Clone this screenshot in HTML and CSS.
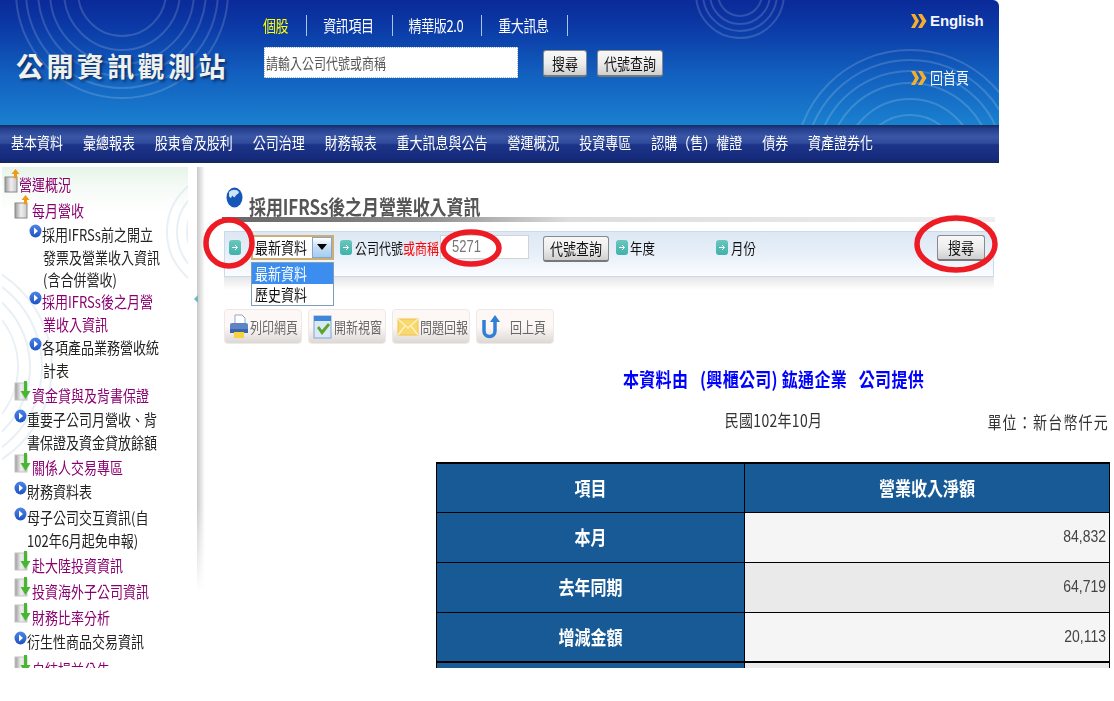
FILE: index.html
```html
<!DOCTYPE html>
<html lang="zh-Hant">
<head>
<meta charset="utf-8">
<title>公開資訊觀測站</title>
<link rel="stylesheet" href="styles.css">
</head>
<body>
<svg class="defs" width="0" height="0" aria-hidden="true">
  <defs>
    <linearGradient id="page" x1="0" y1="0" x2="1" y2="0"><stop offset="0" stop-color="#9a9a9a"/><stop offset=".5" stop-color="#efefef"/><stop offset="1" stop-color="#c8c8c8"/></linearGradient>
    <linearGradient id="ball" x1="0" y1="0" x2="0" y2="1"><stop offset="0" stop-color="#4f86e6"/><stop offset="1" stop-color="#1c52c4"/></linearGradient>
    <linearGradient id="teal" x1="0" y1="0" x2="0" y2="1"><stop offset="0" stop-color="#69c7bd"/><stop offset="1" stop-color="#3fb2ab"/></linearGradient>
    <symbol id="up" viewBox="0 0 18 24"><rect x="1" y="8" width="12" height="15" fill="url(#page)" stroke="#8a8a8a"/><path d="M10 9V5H7.5L11.5 0l4 5H13v5z" fill="#f29a12"/></symbol>
    <symbol id="down" viewBox="0 0 18 24"><rect x="1" y="3" width="12" height="17" fill="url(#page)" stroke="#c4c4c4"/><path d="M10 1h3v10h3.500l-5 8-5-8H10z" fill="#46b82f"/></symbol>
    <symbol id="leaf" viewBox="0 0 13 14"><ellipse cx="6.5" cy="7" rx="6" ry="6.5" fill="url(#ball)"/><path d="M5 3.5l4 3.5-4 3.5z" fill="#fff"/></symbol>
    <symbol id="go" viewBox="0 0 12 15"><rect x="0" y="0" width="12" height="15" rx="3" fill="url(#teal)"/><path d="M3 7.5h5M6 5l2.5 2.500L6 10" fill="none" stroke="#fff" stroke-width="1"/></symbol>
    <symbol id="chev" viewBox="0 0 16 16"><path d="M0 1h4l4 7-4 7H0l4-7zM7 1h4l4.500 7-4.500 7H7l4-7z" fill="#f4ad2c"/></symbol>
  </defs>
</svg>

<div class="page">
  <header class="site-header">
    <div class="banner">
      <svg class="arcs" width="999" height="125" aria-hidden="true">
        <g fill="none" stroke="#fff" stroke-opacity=".16" stroke-width="2">
          <circle cx="122" cy="-8" r="106"/><circle cx="122" cy="-8" r="96"/><circle cx="122" cy="-8" r="84"/><circle cx="122" cy="-8" r="72"/><circle cx="122" cy="-8" r="58"/><circle cx="122" cy="-8" r="44"/>
          <circle cx="740" cy="-6" r="44"/><circle cx="740" cy="-6" r="37"/><circle cx="740" cy="-6" r="30"/><circle cx="740" cy="-6" r="22"/>
          <circle cx="910" cy="165" r="115"/><circle cx="910" cy="165" r="105"/><circle cx="910" cy="165" r="94"/><circle cx="910" cy="165" r="82"/><circle cx="910" cy="165" r="66"/><circle cx="910" cy="165" r="50"/>
        </g>
      </svg>
      <div class="logo">公開資訊觀測站</div>
      <div class="finder">
        <nav class="tabs">
          <a class="tab tab-on"><span class="t">個股</span></a>
          <a class="tab"><span class="t">資訊項目</span></a>
          <a class="tab"><span class="t">精華版2.0</span></a>
          <a class="tab"><span class="t">重大訊息</span></a>
        </nav>
        <div class="search-row">
          <div class="search-box"><span class="t">請輸入公司代號或商稱</span></div>
          <button class="btn btn-search" type="button"><span class="t">搜尋</span></button>
          <button class="btn btn-code" type="button"><span class="t">代號查詢</span></button>
        </div>
      </div>
      <div class="links">
        <a class="link link-en"><svg class="chev" width="16" height="16"><use href="#chev"/></svg>English</a>
        <a class="link"><svg class="chev" width="16" height="16"><use href="#chev"/></svg><span class="t">回首頁</span></a>
      </div>
    </div>
    <nav class="mainnav">
      <a><span class="t">基本資料</span></a>
      <a><span class="t">彙總報表</span></a>
      <a><span class="t">股東會及股利</span></a>
      <a><span class="t">公司治理</span></a>
      <a><span class="t">財務報表</span></a>
      <a><span class="t">重大訊息與公告</span></a>
      <a><span class="t">營運概況</span></a>
      <a><span class="t">投資專區</span></a>
      <a><span class="t">認購（售）權證</span></a>
      <a><span class="t">債券</span></a>
      <a><span class="t">資產證券化</span></a>
    </nav>
  </header>

  <div class="body-row">
    <aside class="sidebar">
      <svg class="side-arcs" width="186" height="425" aria-hidden="true">
        <g fill="none" stroke="#d8e6ee" stroke-opacity=".6" stroke-width="2">
          <circle cx="225" cy="65" r="60"/><circle cx="225" cy="65" r="50"/><circle cx="225" cy="65" r="40"/><circle cx="225" cy="65" r="30"/>
          <circle cx="-60" cy="200" r="110"/><circle cx="-60" cy="200" r="100"/><circle cx="-60" cy="200" r="88"/><circle cx="-60" cy="200" r="76"/>
        </g>
      </svg>
      <span class="side-toggle"></span>
      <div class="row folder lv0"><svg class="ficon" width="18" height="24"><use href="#up"/></svg><span class="t">營運概況</span></div>
      <div class="row folder lv1"><svg class="ficon" width="18" height="24"><use href="#up"/></svg><span class="t">每月營收</span></div>
      <div class="row leaf lv2 h3"><svg class="licon" width="13" height="14"><use href="#leaf"/></svg><div><span class="ln">採用IFRSs前之開立</span><span class="ln in">發票及營業收入資訊</span><span class="ln in">(含合併營收)</span></div></div>
      <div class="row leaf lv2 h2 on"><svg class="licon" width="13" height="14"><use href="#leaf"/></svg><div><span class="ln">採用IFRSs後之月營</span><span class="ln in">業收入資訊</span></div></div>
      <div class="row leaf lv2 h2"><svg class="licon" width="13" height="14"><use href="#leaf"/></svg><div><span class="ln">各項產品業務營收統</span><span class="ln in">計表</span></div></div>
      <div class="row folder lv1"><svg class="ficon" width="18" height="24"><use href="#down"/></svg><span class="t">資金貸與及背書保證</span></div>
      <div class="row leaf lv1b h2"><svg class="licon" width="13" height="14"><use href="#leaf"/></svg><div><span class="ln">重要子公司月營收、背</span><span class="ln">書保證及資金貸放餘額</span></div></div>
      <div class="row folder lv1"><svg class="ficon" width="18" height="24"><use href="#down"/></svg><span class="t">關係人交易專區</span></div>
      <div class="row leaf lv1b h1"><svg class="licon" width="13" height="14"><use href="#leaf"/></svg><div><span class="ln">財務資料表</span></div></div>
      <div class="row leaf lv1b h2"><svg class="licon" width="13" height="14"><use href="#leaf"/></svg><div><span class="ln">母子公司交互資訊(自</span><span class="ln">102年6月起免申報)</span></div></div>
      <div class="row folder lv1"><svg class="ficon" width="18" height="24"><use href="#down"/></svg><span class="t">赴大陸投資資訊</span></div>
      <div class="row folder lv1"><svg class="ficon" width="18" height="24"><use href="#down"/></svg><span class="t">投資海外子公司資訊</span></div>
      <div class="row folder lv1"><svg class="ficon" width="18" height="24"><use href="#down"/></svg><span class="t">財務比率分析</span></div>
      <div class="row leaf lv1b h1"><svg class="licon" width="13" height="14"><use href="#leaf"/></svg><div><span class="ln">衍生性商品交易資訊</span></div></div>
      <div class="row folder lv1"><svg class="ficon" width="18" height="24"><use href="#down"/></svg><span class="t">自結損益公告</span></div>
    </aside>

    <main class="content">
      <div class="title-row">
        <svg class="globe" width="17" height="21" viewBox="0 0 17 21" aria-hidden="true"><ellipse cx="8.500" cy="10.500" rx="8" ry="10" fill="#1457b8"/><path d="M3 5c3-3 8-3 10 0-1 3-3 2-4 5-2 1-2-2-3-1-1 3-2 2-3 0z" fill="#cfe3f5"/></svg>
        <h1 class="title"><span class="t">採用IFRSs後之月營業收入資訊</span></h1>
      </div>
      <div class="title-bar"></div>

      <form class="toolbar">
        <svg class="go go-first" width="12" height="15"><use href="#go"/></svg>
        <div class="select">
          <div class="select-box"><span class="t">最新資料</span><span class="select-arrow"></span></div>
          <ul class="select-list">
            <li class="sel"><span class="t">最新資料</span></li>
            <li><span class="t">歷史資料</span></li>
          </ul>
        </div>
        <svg class="go" width="12" height="15"><use href="#go"/></svg>
        <label class="lbl lbl-code"><span class="t">公司代號<b class="red">或商稱</b></span></label>
        <div class="code-input"><span class="t">5271</span></div>
        <button class="btn btn-tool-code" type="button"><span class="t">代號查詢</span></button>
        <svg class="go" width="12" height="15"><use href="#go"/></svg>
        <label class="lbl lbl-year"><span class="t">年度</span></label>
        <svg class="go" width="12" height="15"><use href="#go"/></svg>
        <label class="lbl"><span class="t">月份</span></label>
        <button class="btn btn-tool-search" type="button"><span class="t">搜尋</span></button>
      </form>
      <div class="toolbar-shadow"></div>

      <div class="actions">
        <a class="action">
          <svg width="20" height="26" viewBox="0 0 20 26"><path d="M6 1h7l3 3v6H6z" fill="#fff" stroke="#8fa8cc"/><rect x="1" y="9" width="18" height="9" rx="2" fill="#5f84c4"/><rect x="1" y="15" width="18" height="4" fill="#3e64a8"/><rect x="5" y="18" width="10" height="6" fill="#f7d23f"/></svg>
          <span class="t">列印網頁</span>
        </a>
        <a class="action">
          <svg width="20" height="26" viewBox="0 0 20 26"><rect x="1" y="2" width="17" height="22" fill="#dbe9f7" stroke="#7fa6d6"/><rect x="1" y="2" width="17" height="5" fill="#3d86d8"/><path d="M4 14l2-2 3 4 6-7 2 2-8 10z" fill="#5aa52e"/></svg>
          <span class="t">開新視窗</span>
        </a>
        <a class="action">
          <svg width="22" height="26" viewBox="0 0 22 26"><rect x="1" y="5" width="20" height="16" fill="#f9d86e" stroke="#eec24a"/><path d="M1 5l10 9 10-9M1 21l7-9M21 21l-7-9" fill="none" stroke="#fdf1bd" stroke-width="1.500"/></svg>
          <span class="t">問題回報</span>
        </a>
        <a class="action action-back">
          <svg width="20" height="26" viewBox="0 0 20 26"><path d="M3 6v11a5.500 5.500 0 0 0 11 0V7" fill="none" stroke="#2f7fd6" stroke-width="3.500"/><path d="M14 1l5 7H9z" fill="#2f7fd6"/></svg>
          <span class="t action-gap">回上頁</span>
        </a>
      </div>

      <div class="report">
        <p class="source"><span class="t">本資料由&nbsp;&nbsp;&nbsp;(興櫃公司) 鈜通企業&nbsp;&nbsp;&nbsp;公司提供</span></p>
        <div class="period"><span class="t">民國102年10月</span><span class="unit t">單位：新台幣仟元</span></div>
        <table class="data">
          <colgroup><col class="c1"><col class="c2"></colgroup>
          <tr class="head"><th><span class="t">項目</span></th><th><span class="t">營業收入淨額</span></th></tr>
          <tr><th><span class="t">本月</span></th><td class="odd"><span class="t">84,832</span></td></tr>
          <tr><th><span class="t">去年同期</span></th><td class="even"><span class="t">64,719</span></td></tr>
          <tr><th><span class="t">增減金額</span></th><td class="odd"><span class="t">20,113</span></td></tr>
          <tr class="next"><th></th><td class="even"></td></tr>
        </table>
      </div>
    </main>
  </div>

  <svg class="marks" width="1114" height="668" aria-hidden="true">
    <g fill="none" stroke="#ed1c24" stroke-width="5.500">
      <ellipse cx="229" cy="243" rx="23" ry="23"/>
      <ellipse cx="471" cy="248" rx="28" ry="16"/>
      <ellipse cx="956" cy="244" rx="39" ry="26"/>
    </g>
  </svg>
</div>
</body>
</html>
```
FILE: styles.css
```css
* { box-sizing: border-box; }
html, body { margin: 0; padding: 0; background: #fff; }
body { font-family: "Noto Sans CJK TC", "Liberation Sans", sans-serif; font-size: 13px; color: #222; }
.defs { position: absolute; }
.page { position: relative; width: 1114px; height: 668px; overflow: hidden; background: #fff; }
.t { display: inline-block; transform: scaleY(1.22); line-height: 1; }

/* header */
.site-header { width: 999px; }
.banner { position: relative; height: 125px; display: flex; overflow: hidden; border-radius: 0 6px 0 0;
  background: linear-gradient(#0a2a98 0, #0b3aa6 22%, #1260bf 60%, #1a80cf 100%); }
.arcs { position: absolute; left: 0; top: 0; }
.logo { position: relative; flex: none; width: 263px; padding: 44px 0 0 16px; font-size: 27px; font-weight: 700; letter-spacing: 3.400px; line-height: 44px; color: #f1f1ec; text-shadow: 2px 2px 3px #0a2d66; white-space: nowrap; }
.finder { position: relative; flex: none; width: 647px; }
.tabs { display: flex; height: 47px; padding-top: 15px; }
.tab { height: 21px; padding-right: 18px; margin-right: 16px; border-right: 1px solid #a9c4e6; color: #fff; font-size: 13px; letter-spacing: -.4px; line-height: 21px; white-space: nowrap; }
.tab-on { color: #ff0; }
.search-row { display: flex; align-items: flex-start; padding-left: 1px; }
.search-box { width: 254px; height: 31px; margin-right: 25px; padding: 0 1px; background: #fff; border: 1px dotted #9fb5cf; color: #555; font-size: 12px; line-height: 29px; white-space: nowrap; }
.btn { height: 27px; padding: 0; border: 1px solid #8a8a8a; border-bottom: 2px solid #777; border-radius: 3px; background: linear-gradient(#f8f8f8, #ededed 50%, #cfcfcf); color: #111; font-family: inherit; font-size: 13px; line-height: 23px; }
.btn-search { width: 44px; margin: 3px 10px 0 0; }
.btn-code { width: 66px; margin-top: 3px; }
.links { position: relative; flex: none; padding: 11px 0 0 1px; display: flex; flex-direction: column; }
.link { display: flex; align-items: center; height: 20px; margin-bottom: 38px; color: #f2f6fb; font-size: 13px; white-space: nowrap; }
.link-en { font: 700 15px "Liberation Sans", sans-serif; letter-spacing: -.1px; }
.chev { margin: 0 3px 0 0; flex: none; }

.mainnav { height: 38px; display: flex; gap: 19.900px; padding: 0 0 4px 11px; align-items: center;
  background: linear-gradient(#162a60 0, #233f8d 10%, #3a56a6 30%, #2f4a9a 48%, #1c3488 52%, #152a7c 88%, #13285c 100%); }
.mainnav a { color: #fff; font-size: 13px; white-space: nowrap; line-height: 1; }

/* layout */
.body-row { display: flex; height: 505px; }

/* sidebar */
.sidebar { position: relative; width: 205px; flex: none; padding-top: 7px; background: #fff; }
.sidebar::before { content: ""; position: absolute; left: 2px; top: 4px; width: 186px; height: 425px; background: linear-gradient(#e6f4e8 0, #f6fbf7 5%, #fff 11%); }
.sidebar::after { content: ""; position: absolute; left: 197px; top: 4px; width: 8px; height: 425px; background: linear-gradient(90deg, #c9c9c9, #fff); -webkit-mask-image: linear-gradient(#000 80%, transparent); mask-image: linear-gradient(#000 80%, transparent); }
.side-arcs { position: absolute; left: 2px; top: 4px; }
.side-toggle { position: absolute; left: 194px; top: 132px; width: 0; height: 0; border: 4px solid transparent; border-left: 0; border-right: 4px solid #6db9bd; z-index: 1; }
.row { position: relative; display: flex; color: #222; font-size: 13px; white-space: nowrap; z-index: 1; }
.folder { height: 26px; align-items: flex-end; color: #8b0070; line-height: 1; padding-bottom: 5px; }
.ficon { flex: none; margin-bottom: -2px; }
.lv0 { padding-left: 4px; }
.lv0 .ficon { margin-right: -3px; }
.lv1 { padding-left: 14px; }
.lv1 .ficon { margin-right: 0; }
.leaf { padding-top: 2px; }
.leaf .licon { flex: none; margin-top: 0; }
.ln { display: block; height: 22.500px; line-height: 22.500px; transform: scaleY(1.2); }
.in { margin-left: 1px; }
.lv2 { padding-left: 29px; }
.lv1b { padding-left: 14px; }
.h3 { height: 67px; }
.h2 { height: 46px; }
.h1 { height: 26px; }
.on { color: #8b0070; }

/* content */
.content { flex: 1; min-width: 0; padding-left: 19px; position: relative; }
.title-row { display: flex; align-items: flex-start; height: 54px; padding-top: 24px; margin-left: 2px; }
.globe { flex: none; }
.title { margin: 9px 0 0 6px; font-size: 17px; font-weight: 700; color: #555; line-height: 20px; letter-spacing: -.1px; white-space: nowrap; }
.title-bar { width: 773px; height: 5px; margin: 0 0 9px -2px; background: linear-gradient(90deg, #666 0, #888 25%, #ddd 45%, #eee 100%); }
.toolbar { position: relative; width: 770px; height: 46px; display: flex; align-items: flex-start; padding: 3px 0 0 4px; border: 1px solid #c8dbec; background: linear-gradient(#dde8f4, #e6eef8 45%, #fbfdff); font-size: 12.500px; }
.go { flex: none; margin-top: 5px; }
.go-first { margin-right: 10px; }
.select { position: relative; width: 83px; margin-right: 6px; }
.select-box { height: 25px; padding-left: 2px; border: 2px solid #cfae72; background: #fff; font-size: 13px; line-height: 22px; color: #111; white-space: nowrap; }
.select-arrow { position: absolute; right: 2px; top: 2px; width: 20px; height: 21px; border: 1px solid #86a6c8; background: linear-gradient(#fff 0, #c4dcf4 50%, #a5cdf2); }
.select-arrow::after { content: ""; position: absolute; left: 4px; top: 6px; border: 5px solid transparent; border-top: 6px solid #000; border-bottom: 0; }
.select-list { position: absolute; z-index: 3; left: 0; top: 27px; width: 83px; margin: 0; padding: 0; list-style: none; border: 1px solid #7f9db9; background: #fff; color: #111; font-size: 13px; }
.select-list li { height: 21px; padding-left: 3px; line-height: 21px; white-space: nowrap; }
.select-list .sel { background: #3b8eef; color: #fff; }
.lbl { margin: 5px 0 0 3px; line-height: 15px; color: #111; white-space: nowrap; }
.lbl-code { width: 84px; margin-right: 1px; font-size: 12px; }
.red { color: #f00; font-weight: 400; }
.code-input { flex: none; width: 89px; height: 24px; padding-left: 11px; background: #fff; border: 1px solid #d3d3d3; color: #777; font: 13px/22px "Liberation Sans", sans-serif; }
.btn-tool-code { width: 66px; height: 26px; margin: 1px 7px 0 14px; flex: none; }
.lbl-year { width: 86px; margin-left: 2px; }
.btn-tool-search { position: absolute; right: 8px; top: 3px; width: 48px; height: 26px; }
.toolbar-shadow { width: 770px; height: 13px; background: linear-gradient(#e6e6e6, #fff); }
.actions { display: flex; gap: 6px; margin-top: 19px; }
.action { display: flex; align-items: center; gap: 1px; width: 78px; height: 35px; padding-left: 4px; border: 1px solid #f0e8e6; border-radius: 4px; background: linear-gradient(#fdf8f6, #fdf8f6 50%, #dcd8d4); color: #666; font-size: 12px; line-height: 1; white-space: nowrap; }
.action-gap { margin-left: 8px; }

.report { width: 673px; margin-left: 213px; padding-top: 23px; }
.source { margin: 0; text-align: center; color: #00f; font-size: 16px; font-weight: 700; letter-spacing: .3px; line-height: 22px; white-space: nowrap; }
.period { position: relative; margin-top: 20px; height: 53px; text-align: center; font-size: 14px; line-height: 22px; color: #333; letter-spacing: .3px; }
.unit { position: absolute; right: 1px; top: 6px; letter-spacing: 1.200px; }
.data { width: 674px; margin-left: -1px; border-collapse: collapse; table-layout: fixed; border-top: 2px solid #000; }
.c1 { width: 308px; }
.data th, .data td { height: 50px; padding: 0 3px 2px; border: 1px solid #000; font-size: 16px; }
.data .head th { height: 49px; }
.data th { background: #175a96; color: #fff; font-weight: 700; text-align: center; }
.data td { text-align: right; color: #444; font: 14px "Liberation Sans", sans-serif; }
.data .next th, .data .next td { border-top: 2px solid #000; }
.odd { background: #f5f5f5; }
.even { background: #eaeaea; }

/* hand-drawn annotations over the screenshot */
.marks { position: absolute; left: 0; top: 0; pointer-events: none; z-index: 5; }
```
